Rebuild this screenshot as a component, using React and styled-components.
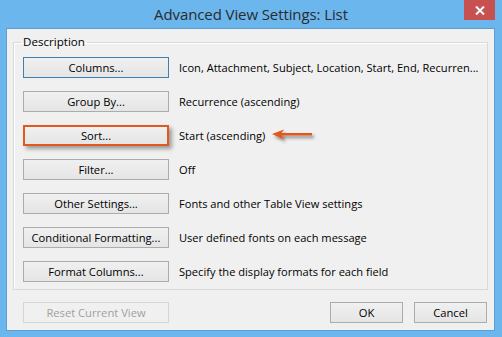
import React from "react";
import styled, { createGlobalStyle, css } from "styled-components";

const Global = createGlobalStyle`
  html, body { margin: 0; padding: 0; }
  body { font-family: "Open Sans", "Noto Sans", sans-serif; }
`;

const Frame = styled.div`
  width: 502px;
  height: 337px;
  background: #6cb6ee;
  display: flex;
  flex-direction: column;
  box-sizing: border-box;
  overflow: hidden;
`;

const TitleBar = styled.div`
  height: 28px;
  display: grid;
  grid-template-columns: 1fr auto 1fr;
  align-items: start;
`;

const Title = styled.div`
  grid-column: 2;
  font-size: 15px;
  line-height: 28px;
  color: #2b2b2b;
  letter-spacing: -0.1px;
`;

const CloseButton = styled.div`
  grid-column: 3;
  justify-self: end;
  margin-right: 7px;
  width: 31px;
  height: 20px;
  background: #c75050;
  display: flex;
  align-items: center;
  justify-content: center;
`;

const Panel = styled.div`
  margin: 0 7px 6px 6px;
  flex: 1;
  min-width: 0;
  background: #f0f0f0;
  box-shadow: inset 0 0 0 1px #5b9fd3;
  padding: 6px 7px 8px 7px;
  display: flex;
  flex-direction: column;
`;

const Group = styled.fieldset`
  margin: 0;
  min-width: 0;
  border: 1px solid #d9d9d9;
  box-shadow: inset 1px 1px 0 #ffffff;
  padding: 7px 3px 7px 9px;
  display: flex;
  flex-direction: column;
  gap: 13px;
`;

const Legend = styled.legend`
  font-size: 11.6px;
  line-height: 16px;
  padding: 0 2px;
  margin-left: -2px;
  color: #000;
`;

const Row = styled.div`
  display: flex;
  align-items: center;
  gap: 10px;
  min-width: 0;
`;

const Button = styled.div`
  box-sizing: border-box;
  width: ${(p) => p.$w || 146}px;
  height: 21px;
  border: 1px solid #acacac;
  background: linear-gradient(#f0f0f0, #e5e5e5);
  font-size: 11.2px;
  line-height: 19px;
  text-align: center;
  color: #000;
  flex: none;
  white-space: nowrap;
  ${(p) =>
    p.$default &&
    css`
      border-color: #3c7fb1;
    `}
  ${(p) =>
    p.$disabled &&
    css`
      border-color: #d5d5d5;
      background: #f0f0f0;
      color: #a0a0a0;
    `}
  ${(p) =>
    p.$marked &&
    css`
      border: 2px solid #e2581f;
      line-height: 17px;
      box-shadow: 3px 3px 4px rgba(0, 0, 0, 0.35);
    `}
`;

const Desc = styled.span`
  font-size: 11.1px;
  color: #000;
  white-space: nowrap;
`;

const Arrow = styled.svg`
  margin-left: -4px;
  flex: none;
`;

const Footer = styled.div`
  margin-top: 12px;
  display: flex;
  align-items: center;
  padding: 0 1px 0 10px;
`;

const Spacer = styled.div`
  flex: 1;
`;

const FooterGap = styled.div`
  width: 11px;
`;

const rows = [
  ["Columns...", "Icon, Attachment, Subject, Location, Start, End, Recurren...", { $default: true }],
  ["Group By...", "Recurrence (ascending)", {}],
  ["Sort...", "Start (ascending)", { $marked: true }],
  ["Filter...", "Off", {}],
  ["Other Settings...", "Fonts and other Table View settings", {}],
  ["Conditional Formatting...", "User defined fonts on each message", {}],
  ["Format Columns...", "Specify the display formats for each field", {}],
];

export default function App() {
  return (
    <>
      <Global />
      <Frame>
        <TitleBar>
          <Title>Advanced View Settings: List</Title>
          <CloseButton>
            <svg width="10" height="9" viewBox="0 0 10 9">
              <path d="M1 0.5 L9 8.5 M9 0.5 L1 8.5" stroke="#fff" strokeWidth="2" />
            </svg>
          </CloseButton>
        </TitleBar>
        <Panel>
          <Group>
            <Legend>Description</Legend>
            {rows.map(([label, desc, props]) => (
              <Row key={label}>
                <Button {...props}>{label}</Button>
                <Desc>{desc}</Desc>
                {props.$marked && (
                  <Arrow width="46" height="16" viewBox="0 0 46 16">
                    <defs>
                      <filter id="sh" x="-20%" y="-50%" width="150%" height="200%">
                        <feDropShadow dx="2" dy="2.5" stdDeviation="1.4" floodColor="#000" floodOpacity="0.45" />
                      </filter>
                    </defs>
                    <g filter="url(#sh)">
                      <path d="M1 6 L13 1.5 L10.5 5 L41 5 L41 7.5 L10.5 7.5 L13 11.5 Z" fill="#e2581f" />
                    </g>
                  </Arrow>
                )}
              </Row>
            ))}
          </Group>
          <Footer>
            <Button $disabled>Reset Current View</Button>
            <Spacer />
            <Button $w={73}>OK</Button>
            <FooterGap />
            <Button $w={73}>Cancel</Button>
          </Footer>
        </Panel>
      </Frame>
    </>
  );
}
